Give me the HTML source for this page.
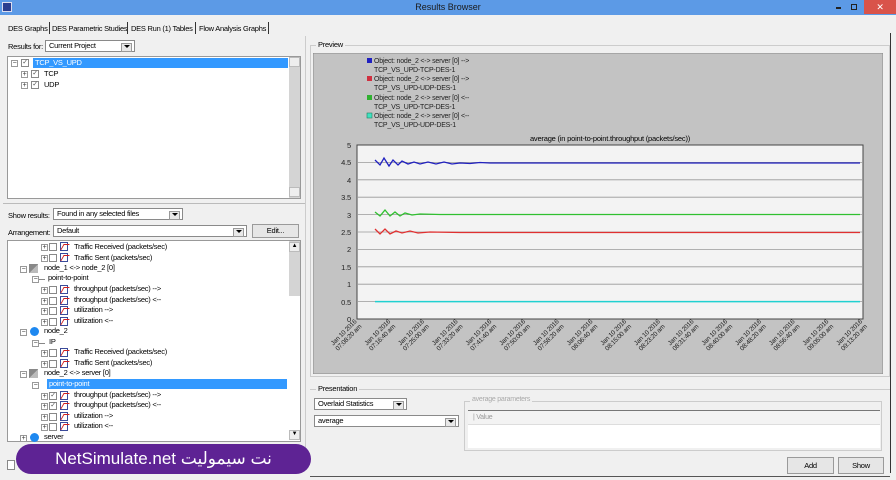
<!DOCTYPE html>
<html><head><meta charset="utf-8"><style>
*{box-sizing:border-box;margin:0;padding:0}
body{width:896px;height:480px;overflow:hidden;background:#f0f0f0;font-family:"Liberation Sans",sans-serif;font-size:7.5px;letter-spacing:-0.25px;color:#000;position:relative}
.a{position:absolute;white-space:nowrap}
.combo{position:absolute;background:#fff;border:1px solid #8a8a8a;height:12px;padding-left:3px;line-height:10px;font-size:7.5px}
.combo:after{content:"";position:absolute;right:2px;top:2px;width:9px;height:7px;background:#e8e8e8;border:1px solid #999}
.combo b{position:absolute;right:4px;top:4px;width:0;height:0;border-left:3px solid transparent;border-right:3px solid transparent;border-top:3px solid #000;z-index:2}
.btn{position:absolute;background:#e6e6e6;border:1px solid #9a9a9a;text-align:center;font-size:7.5px}
.r{position:absolute;height:10px;line-height:10px;white-space:nowrap;font-size:7.5px}
.ex{position:absolute;width:7px;height:7px;border:1px solid #999;background:#fff;font-size:7px;line-height:5px;text-align:center;color:#333}
.cb{position:absolute;width:8px;height:8px;border:1px solid #888;background:#fff;font-size:7px;line-height:6px;text-align:center;color:#555}
.ic{position:absolute;width:8px;height:9px;border:1px solid #3a4a9a;background:#fff}
.ic:after{content:"";position:absolute;left:1px;top:1px;width:5px;height:5px;border-left:1px solid #d02020;border-top:1px solid #d02020;transform:skewX(-30deg)}
</style></head><body>
<div class="a" style="left:0;top:0;width:896px;height:15px;background:#5c9ae6"></div>
<div class="a" style="left:2px;top:2px;width:10px;height:10px;background:#2a3d8f;border:1px solid #dde"></div>
<div class="a" style="left:0;top:2px;width:896px;text-align:center;font-size:9px;letter-spacing:0;color:#1a1a1a">Results Browser</div>
<div class="a" style="left:836px;top:7px;width:5px;height:2px;background:#222"></div>
<div class="a" style="left:851px;top:4px;width:6px;height:6px;border:1px solid #222"></div>
<div class="a" style="left:864px;top:0;width:32px;height:14px;background:#d9534a;color:#fff;text-align:center;font-size:9px;line-height:14px">✕</div>

<div class="a" style="left:8px;top:24px">DES Graphs</div>
<div class="a" style="left:49px;top:22px;width:1px;height:12px;background:#333"></div>
<div class="a" style="left:52px;top:24px">DES Parametric Studies</div>
<div class="a" style="left:127px;top:22px;width:1px;height:12px;background:#333"></div>
<div class="a" style="left:131px;top:24px">DES Run (1) Tables</div>
<div class="a" style="left:195px;top:22px;width:1px;height:12px;background:#333"></div>
<div class="a" style="left:199px;top:24px">Flow Analysis Graphs</div>
<div class="a" style="left:268px;top:22px;width:1px;height:12px;background:#333"></div>

<div class="a" style="left:8px;top:42px">Results for:</div>
<div class="combo" style="left:45px;top:40px;width:90px">Current Project<b></b></div>

<div class="a" style="left:7px;top:56px;width:294px;height:143px;background:#fff;border:1px solid #999"></div>
<div class="a" style="left:289px;top:57px;width:11px;height:141px;background:#d4d4d4"></div>
<div class="a" style="left:289px;top:57px;width:11px;height:10px;background:#eee;border:1px solid #bbb"></div>
<div class="a" style="left:289px;top:187px;width:11px;height:10px;background:#eee;border:1px solid #bbb"></div>
<div class="a" style="left:33px;top:58px;width:255px;height:10px;background:#3399ff"></div>
<div class="ex" style="left:11px;top:60px">−</div>
<div class="cb" style="left:21px;top:59px">✓</div>
<div class="r" style="left:35px;top:58px;color:#fff">TCP_VS_UPD</div>
<div class="ex" style="left:21px;top:71px">+</div>
<div class="cb" style="left:31px;top:70px">✓</div>
<div class="r" style="left:44px;top:69px">TCP</div>
<div class="ex" style="left:21px;top:82px">+</div>
<div class="cb" style="left:31px;top:81px">✓</div>
<div class="r" style="left:44px;top:80px">UDP</div>

<div class="a" style="left:3px;top:203px;width:302px;height:1px;background:#bbb"></div>
<div class="a" style="left:8px;top:211px">Show results:</div>
<div class="combo" style="left:53px;top:208px;width:130px">Found in any selected files<b></b></div>
<div class="a" style="left:8px;top:228px">Arrangement:</div>
<div class="combo" style="left:53px;top:225px;width:194px">Default<b></b></div>
<div class="btn" style="left:252px;top:224px;width:47px;height:14px;line-height:12px">Edit...</div>

<div class="a" style="left:7px;top:240px;width:294px;height:202px;background:#fff;border:1px solid #999"></div>
<div class="a" style="left:289px;top:241px;width:11px;height:200px;background:#fff"></div>
<div class="a" style="left:289px;top:241px;width:11px;height:55px;background:#d4d4d4"></div>
<div class="a" style="left:289px;top:242px;width:11px;height:10px;background:#eee;border:1px solid #bbb;font-size:6px;text-align:center">▲</div>
<div class="a" style="left:289px;top:430px;width:11px;height:10px;background:#eee;border:1px solid #bbb;font-size:6px;text-align:center">▼</div>
<div class="a" style="left:47px;top:379px;width:240px;height:10px;background:#3399ff"></div>

<div class="ex" style="left:41px;top:244px">+</div><div class="cb" style="left:49px;top:243px"></div><div class="ic" style="left:60px;top:242px"></div><div class="r" style="left:74px;top:242px">Traffic Received (packets/sec)</div>
<div class="ex" style="left:41px;top:255px">+</div><div class="cb" style="left:49px;top:254px"></div><div class="ic" style="left:60px;top:253px"></div><div class="r" style="left:74px;top:253px">Traffic Sent (packets/sec)</div>
<div class="ex" style="left:20px;top:266px">−</div><div class="a" style="left:29px;top:264px;width:9px;height:9px;background:linear-gradient(135deg,#888 50%,#bbb 50%)"></div><div class="r" style="left:44px;top:263px">node_1 &lt;-&gt; node_2 [0]</div>
<div class="ex" style="left:32px;top:276px">−</div><div class="a" style="left:39px;top:279px;width:6px;height:1px;background:#888"></div><div class="r" style="left:48px;top:273px">point-to-point</div>
<div class="ex" style="left:41px;top:287px">+</div><div class="cb" style="left:49px;top:286px"></div><div class="ic" style="left:60px;top:285px"></div><div class="r" style="left:74px;top:284px">throughput (packets/sec) --&gt;</div>
<div class="ex" style="left:41px;top:298px">+</div><div class="cb" style="left:49px;top:297px"></div><div class="ic" style="left:60px;top:296px"></div><div class="r" style="left:74px;top:295px">throughput (packets/sec) &lt;--</div>
<div class="ex" style="left:41px;top:308px">+</div><div class="cb" style="left:49px;top:307px"></div><div class="ic" style="left:60px;top:306px"></div><div class="r" style="left:74px;top:305px">utilization --&gt;</div>
<div class="ex" style="left:41px;top:319px">+</div><div class="cb" style="left:49px;top:318px"></div><div class="ic" style="left:60px;top:317px"></div><div class="r" style="left:74px;top:316px">utilization &lt;--</div>
<div class="ex" style="left:20px;top:329px">−</div><div class="a" style="left:30px;top:327px;width:9px;height:9px;border-radius:50%;background:#1e88f0"></div><div class="r" style="left:44px;top:326px">node_2</div>
<div class="ex" style="left:32px;top:340px">−</div><div class="a" style="left:39px;top:343px;width:6px;height:1px;background:#888"></div><div class="r" style="left:49px;top:337px">IP</div>
<div class="ex" style="left:41px;top:350px">+</div><div class="cb" style="left:49px;top:349px"></div><div class="ic" style="left:60px;top:348px"></div><div class="r" style="left:74px;top:347px">Traffic Received (packets/sec)</div>
<div class="ex" style="left:41px;top:361px">+</div><div class="cb" style="left:49px;top:360px"></div><div class="ic" style="left:60px;top:359px"></div><div class="r" style="left:74px;top:358px">Traffic Sent (packets/sec)</div>
<div class="ex" style="left:20px;top:371px">−</div><div class="a" style="left:29px;top:369px;width:9px;height:9px;background:linear-gradient(135deg,#888 50%,#bbb 50%)"></div><div class="r" style="left:44px;top:368px">node_2 &lt;-&gt; server [0]</div>
<div class="ex" style="left:32px;top:382px">−</div><div class="r" style="left:49px;top:379px;color:#fff">point-to-point</div>
<div class="ex" style="left:41px;top:393px">+</div><div class="cb" style="left:49px;top:392px">✓</div><div class="ic" style="left:60px;top:391px"></div><div class="r" style="left:74px;top:390px">throughput (packets/sec) --&gt;</div>
<div class="ex" style="left:41px;top:403px">+</div><div class="cb" style="left:49px;top:402px">✓</div><div class="ic" style="left:60px;top:401px"></div><div class="r" style="left:74px;top:400px">throughput (packets/sec) &lt;--</div>
<div class="ex" style="left:41px;top:414px">+</div><div class="cb" style="left:49px;top:413px"></div><div class="ic" style="left:60px;top:412px"></div><div class="r" style="left:74px;top:411px">utilization --&gt;</div>
<div class="ex" style="left:41px;top:424px">+</div><div class="cb" style="left:49px;top:423px"></div><div class="ic" style="left:60px;top:422px"></div><div class="r" style="left:74px;top:421px">utilization &lt;--</div>
<div class="ex" style="left:20px;top:435px">+</div><div class="a" style="left:30px;top:433px;width:9px;height:9px;border-radius:50%;background:#1e88f0"></div><div class="r" style="left:44px;top:432px">server</div>

<div class="a" style="left:305px;top:36px;width:1px;height:420px;background:#ccc"></div>
<div class="a" style="left:7px;top:460px;width:8px;height:10px;border:1px solid #888;background:#fff"></div>

<div class="a" style="left:16px;top:444px;width:295px;height:30px;border-radius:15px;background:#5e2394;color:#fff;font-size:17px;letter-spacing:0;line-height:30px;text-align:center;font-family:'Liberation Sans','DejaVu Sans',sans-serif">NetSimulate.net نت سیمولیت</div>

<div class="a" style="left:310px;top:45px;width:580px;height:332px;border:1px solid #ccc"></div>
<div class="a" style="left:316px;top:40px;background:#f0f0f0;padding:0 2px">Preview</div>
<div class="a" style="left:890px;top:33px;width:1px;height:440px;background:#333"></div>
<svg class="a" style="left:313px;top:53px;letter-spacing:-0.2px" width="570" height="321" viewBox="313 53 570 321" font-family="Liberation Sans, sans-serif">
<rect x="313" y="53" width="570" height="321" fill="#c3c3c3" stroke="#888"/>
<rect x="357" y="145" width="506" height="174" fill="#f3f3f3" stroke="#444"/>
<g stroke="#999" stroke-width="0.8">
<line x1="357" y1="162.4" x2="863" y2="162.4"/><line x1="357" y1="179.8" x2="863" y2="179.8"/><line x1="357" y1="197.2" x2="863" y2="197.2"/><line x1="357" y1="214.6" x2="863" y2="214.6"/><line x1="357" y1="232" x2="863" y2="232"/><line x1="357" y1="249.4" x2="863" y2="249.4"/><line x1="357" y1="266.8" x2="863" y2="266.8"/><line x1="357" y1="284.2" x2="863" y2="284.2"/><line x1="357" y1="301.6" x2="863" y2="301.6"/>
</g>
<g font-size="7.5" text-anchor="end" fill="#222">
<text x="351" y="148">5</text><text x="351" y="165">4.5</text><text x="351" y="183">4</text><text x="351" y="200">3.5</text><text x="351" y="218">3</text><text x="351" y="235">2.5</text><text x="351" y="252">2</text><text x="351" y="270">1.5</text><text x="351" y="287">1</text><text x="351" y="305">0.5</text><text x="351" y="322">0</text>
</g>
<text x="610" y="141" font-size="7.5" text-anchor="middle">average (in point-to-point.throughput (packets/sec))</text>
<polyline fill="none" stroke="#2020c0" stroke-width="1.3" points="375,160 380,165 384,158 389,166 393,160 398,165 402,161 408,164 414,162 420,164 428,162 436,164 444,162 452,164 460,163 470,163.5 480,162.5 490,163 860,163"/>
<polyline fill="none" stroke="#30c030" stroke-width="1.3" points="375,212 380,216 385,210 390,216 395,212 400,216 405,213 412,215 420,214 440,214.5 860,214.5"/>
<polyline fill="none" stroke="#e03030" stroke-width="1.3" points="375,229 380,234 385,229 390,234 396,231 402,233 410,231 418,233 430,232 460,232.5 860,232.5"/>
<line x1="375" y1="301.6" x2="860" y2="301.6" stroke="#20d0d0" stroke-width="1.5"/>
<g font-size="7" fill="#222">
<rect x="367" y="58" width="5" height="5" fill="#2020c0"/><text x="374" y="63">Object: node_2 &lt;-&gt; server [0] --&gt;</text><text x="374" y="72">TCP_VS_UPD-TCP-DES-1</text>
<rect x="367" y="76" width="5" height="5" fill="#d03040"/><text x="374" y="81">Object: node_2 &lt;-&gt; server [0] --&gt;</text><text x="374" y="90">TCP_VS_UPD-UDP-DES-1</text>
<rect x="367" y="95" width="5" height="5" fill="#30b030"/><text x="374" y="100">Object: node_2 &lt;-&gt; server [0] &lt;--</text><text x="374" y="109">TCP_VS_UPD-TCP-DES-1</text>
<rect x="367" y="113" width="5" height="5" fill="#40e0c0" stroke="#208060" stroke-width="0.6"/><text x="374" y="118">Object: node_2 &lt;-&gt; server [0] &lt;--</text><text x="374" y="127">TCP_VS_UPD-UDP-DES-1</text>
</g>
<g font-size="6.5" fill="#222" text-anchor="end">
<g transform="translate(357,322) rotate(-45)"><text x="0" y="0">Jan 10 2016</text><text x="0" y="7">07:08:20 am</text></g>
<g transform="translate(390.7,322) rotate(-45)"><text>Jan 10 2016</text><text y="7">07:16:40 am</text></g>
<g transform="translate(424.4,322) rotate(-45)"><text>Jan 10 2016</text><text y="7">07:25:00 am</text></g>
<g transform="translate(458.1,322) rotate(-45)"><text>Jan 10 2016</text><text y="7">07:33:20 am</text></g>
<g transform="translate(491.8,322) rotate(-45)"><text>Jan 10 2016</text><text y="7">07:41:40 am</text></g>
<g transform="translate(525.5,322) rotate(-45)"><text>Jan 10 2016</text><text y="7">07:50:00 am</text></g>
<g transform="translate(559.2,322) rotate(-45)"><text>Jan 10 2016</text><text y="7">07:58:20 am</text></g>
<g transform="translate(592.9,322) rotate(-45)"><text>Jan 10 2016</text><text y="7">08:06:40 am</text></g>
<g transform="translate(626.6,322) rotate(-45)"><text>Jan 10 2016</text><text y="7">08:15:00 am</text></g>
<g transform="translate(660.3,322) rotate(-45)"><text>Jan 10 2016</text><text y="7">08:23:20 am</text></g>
<g transform="translate(694,322) rotate(-45)"><text>Jan 10 2016</text><text y="7">08:31:40 am</text></g>
<g transform="translate(727.7,322) rotate(-45)"><text>Jan 10 2016</text><text y="7">08:40:00 am</text></g>
<g transform="translate(761.4,322) rotate(-45)"><text>Jan 10 2016</text><text y="7">08:48:20 am</text></g>
<g transform="translate(795.1,322) rotate(-45)"><text>Jan 10 2016</text><text y="7">08:56:40 am</text></g>
<g transform="translate(828.8,322) rotate(-45)"><text>Jan 10 2016</text><text y="7">09:05:00 am</text></g>
<g transform="translate(862.5,322) rotate(-45)"><text>Jan 10 2016</text><text y="7">09:13:20 am</text></g>
</g>
</svg>

<div class="a" style="left:310px;top:389px;width:580px;height:64px;border-top:1px solid #ccc"></div>
<div class="a" style="left:316px;top:384px;background:#f0f0f0;padding:0 2px">Presentation</div>
<div class="combo" style="left:314px;top:398px;width:93px">Overlaid Statistics<b></b></div>
<div class="combo" style="left:314px;top:415px;width:145px">average<b></b></div>
<div class="a" style="left:464px;top:401px;width:418px;height:50px;border:1px solid #ccc"></div>
<div class="a" style="left:470px;top:396px;background:#f0f0f0;color:#aaa;padding:0 2px;font-size:7px">average parameters</div>
<div class="a" style="left:468px;top:410px;width:412px;height:38px;background:#fff;border-top:1px solid #777"></div>
<div class="a" style="left:468px;top:411px;width:412px;height:14px;background:#f3f3f3;border-bottom:1px solid #ddd"></div>
<div class="a" style="left:473px;top:414px;color:#999;font-size:7px">| Value</div>
<div class="btn" style="left:787px;top:457px;width:47px;height:17px;line-height:15px">Add</div>
<div class="btn" style="left:838px;top:457px;width:46px;height:17px;line-height:15px">Show</div>
<div class="a" style="left:310px;top:476px;width:580px;height:1px;background:#555"></div>
</body></html>
